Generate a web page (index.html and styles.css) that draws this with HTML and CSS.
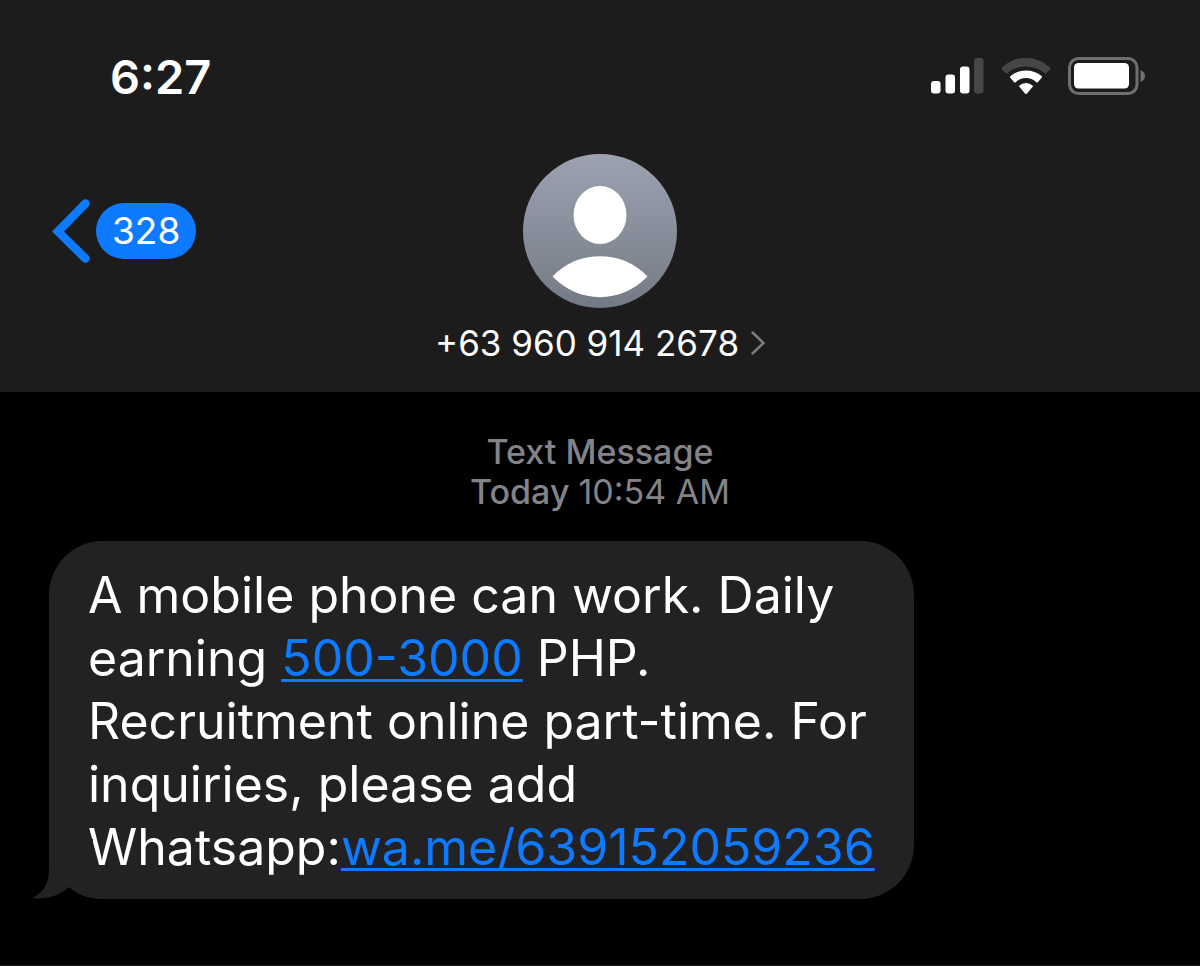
FILE: index.html
```html
<!DOCTYPE html>
<html lang="en">
  <head>
    <meta charset="UTF-8" />
    <meta name="viewport" content="width=device-width, initial-scale=1" />
    <title>Messages</title>
    <link rel="stylesheet" href="styles.css">
  </head>
  <body>
    <header class="header">
      <div class="status-bar">
        <time class="clock">6:27</time>
        <div class="status-icons">
          <svg class="icon-signal" viewBox="0 0 53 36" width="53" height="36">
            <rect x="0" y="23" width="9.5" height="12.5" rx="3" fill="#fff" />
            <rect x="14.5" y="16.5" width="9.5" height="19" rx="3" fill="#fff" />
            <rect x="29" y="8.5" width="9.5" height="27" rx="3" fill="#fff" />
            <rect x="43" y="0" width="9.5" height="35.5" rx="3" fill="#464646" />
          </svg>
          <svg class="icon-wifi" viewBox="0 0 50 38" width="50" height="38">
            <path d="M1 12.5Q0 11.500 1 10.5Q11 1 25 1T49 10.5Q50 11.500 49 12.5L45.5 16Q44.5 17 43.5 16Q36 9.5 25 9.5T6.5 16Q5.5 17 4.5 16Z" fill="#464646" />
            <path d="M9.5 21Q8.5 20 9.5 19Q16 13.5 25 13.5T40.5 19Q41.5 20 40.5 21L37 25Q36 26 35 25Q31 21 25 21T15 25Q14 26 13 25Z" fill="#fff" />
            <path d="M18.5 30Q17.500 29 18.5 28.5Q21 26 25 26T31.5 28.5Q32.5 29 31.5 30L26 36.5Q25 37.5 24 36.5Z" fill="#fff" />
          </svg>
          <svg class="icon-battery" viewBox="0 0 78 38" width="78" height="38">
            <rect x="1.5" y="1.5" width="67.5" height="35" rx="9" fill="none" stroke="#6f6f6f" stroke-width="3" />
            <rect x="6" y="6" width="55" height="25.5" rx="4.5" fill="#fff" />
            <path d="M72.5 13Q77 15 77 19T72.5 25Z" fill="#6f6f6f" />
          </svg>
        </div>
      </div>

      <nav class="nav">
        <a class="back" href="#" aria-label="Back">
          <svg viewBox="0 0 38 66" width="38" height="66">
            <path d="M33.5 5.5L6 33.5L33.5 60.5" fill="none" stroke="#0d7aff" stroke-width="8.5" stroke-linecap="round" stroke-linejoin="miter" />
          </svg>
          <span class="unread">328</span>
        </a>
        <a class="contact" href="#">
          <svg class="avatar" viewBox="0 0 154 154" width="154" height="154">
            <defs>
              <linearGradient id="avatarFill" x1="0" y1="0" x2="0" y2="1">
                <stop offset="0" stop-color="#9da2b1" />
                <stop offset="1" stop-color="#747a85" />
              </linearGradient>
            </defs>
            <circle cx="77" cy="77" r="77" fill="url(#avatarFill)" />
            <ellipse cx="77" cy="61" rx="26.5" ry="29" fill="#fff" />
            <path d="M29.5 122.5C54 95.5 100 95.5 124.5 122.5C98 150 56 150 29.5 122.5Z" fill="#fff" />
          </svg>
          <span class="contact-name">
            +63 960 914 2678
            <svg viewBox="0 0 14 24" width="14" height="24">
              <path d="M1.5 1.5L12.5 12L1.5 22.5" fill="none" stroke="#7b7b80" stroke-width="2.5" stroke-linecap="round" />
            </svg>
          </span>
        </a>
      </nav>
    </header>

    <main class="conversation">
      <div class="stamp">
        <div>Text Message</div>
        <div>Today <time>10:54 AM</time></div>
      </div>

      <div class="bubble">
        A mobile phone can work. Daily<br>
        earning <a href="#">500-3000</a> PHP.<br>
        Recruitment online part-time. For<br>
        inquiries, please add<br>
        Whatsapp:<a href="#">wa.me/639152059236</a>
        <svg class="tail" viewBox="0 0 60 60" width="60" height="60">
          <path d="M16 0V30C16 44 11 54 -1 59C13 61 26 57 36 48C43 54 51 58 60 59V0Z" fill="#222224" />
        </svg>
      </div>
    </main>
  </body>
</html>
```
FILE: styles.css
```css
* {
  box-sizing: border-box;
}

body {
  margin: 0;
  min-height: 100vh;
  display: flex;
  flex-direction: column;
  background: #000;
  color: #fff;
  font-family: Inter, "Liberation Sans", sans-serif;
}

svg {
  display: block;
  flex: none;
}

.header {
  background: #1c1c1c;
  padding-bottom: 26px;
}

.status-bar {
  display: flex;
  justify-content: space-between;
  align-items: center;
  height: 154px;
  padding: 0 54px 2px 110px;
}

.clock {
  font-size: 47px;
  font-weight: 600;
}

.status-icons {
  display: flex;
  align-items: center;
  gap: 17px;
}

.nav {
  display: grid;
  grid-template-columns: 1fr auto 1fr;
}

.back {
  display: flex;
  align-items: center;
  justify-self: start;
  gap: 6px;
  height: 154px;
  padding-left: 52px;
  color: #fff;
  text-decoration: none;
}

.unread {
  padding: 0 16px;
  border-radius: 28px;
  background: #0d7aff;
  font-size: 37px;
  line-height: 56px;
}

.contact {
  display: flex;
  flex-direction: column;
  align-items: center;
  gap: 12px;
  color: #fff;
  text-decoration: none;
}

.contact-name {
  display: flex;
  align-items: center;
  gap: 12px;
  font-size: 35px;
  line-height: 46px;
}

.conversation {
  flex: 1;
  padding: 40px 49px;
  border-bottom: 1px solid #1c1c1c;
}

.stamp {
  color: #838388;
  font-size: 34px;
  font-weight: 500;
  line-height: 40px;
  text-align: center;
}

.stamp time {
  font-weight: 400;
}

.bubble {
  position: relative;
  width: fit-content;
  margin-top: 29px;
  padding: 23px 39px 20px;
  border-radius: 54px;
  background: #222224;
  font-size: 50px;
  line-height: 63px;
}

.bubble a {
  color: #0d7aff;
  text-decoration-thickness: 3px;
  text-underline-offset: 3px;
  text-decoration-skip-ink: none;
}

/* little hook at the lower left corner */
.tail {
  position: absolute;
  left: -16px;
  bottom: 0;
}
```
